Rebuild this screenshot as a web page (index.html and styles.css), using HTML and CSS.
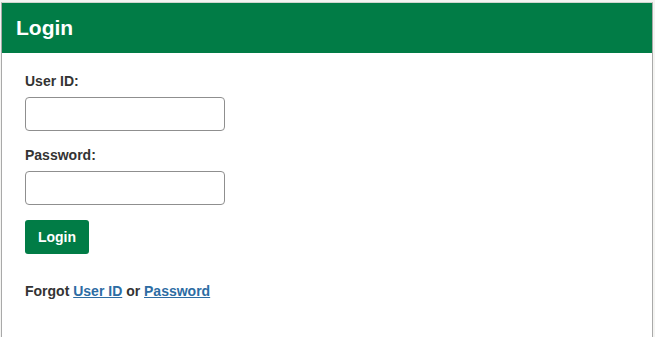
FILE: index.html
```html
<!DOCTYPE html>
<html>
<head>
<meta charset="utf-8">
<link rel="stylesheet" href="styles.css">
</head>
<body>
<div class="panel">
  <div class="panel-header"><h1 class="panel-title">Login</h1></div>
  <form class="panel-body">
    <div class="field">
      <label class="field-label" for="uid">User ID:</label>
      <input class="field-input" id="uid" type="text">
    </div>
    <div class="field">
      <label class="field-label" for="pwd">Password:</label>
      <input class="field-input" id="pwd" type="password">
    </div>
    <button class="btn" type="button">Login</button>
    <p class="forgot">Forgot <a href="#">User ID</a> or <a href="#">Password</a></p>
  </form>
</div>
</body>
</html>
```
FILE: styles.css
```css
html, body {
  margin: 0;
  padding: 0;
  background: #f4f4f2;
}
body {
  padding: 2px 2px 0 1px;
  font-family: "Liberation Sans", Arial, sans-serif;
  height: 335px;
  overflow: hidden;
}
.panel {
  background: #fff;
  border: 1px solid #a9a9a9;
  border-top-color: #cfd6cf;
  border-bottom: 0;
  height: 335px;
  box-sizing: border-box;
}
.panel-header {
  background: #017c46;
  height: 50px;
  display: flex;
  align-items: center;
  padding-left: 14px;
}
.panel-title {
  margin: 0;
  color: #fff;
  font-size: 21px;
  font-weight: bold;
}
.panel-body {
  padding: 19px 23px 0;
  display: flex;
  flex-direction: column;
  align-items: flex-start;
  gap: 15px;
}
.field {
  display: flex;
  flex-direction: column;
}
.field-label {
  font-size: 14px;
  font-weight: bold;
  color: #333;
  line-height: 19px;
  margin-bottom: 6px;
}
.field-input {
  width: 200px;
  height: 34px;
  box-sizing: border-box;
  border: 1px solid #8f8f8f;
  border-radius: 4px;
  margin: 0;
  padding: 4px 8px;
  background: #fff;
}
.btn {
  background: #017c46;
  color: #fff;
  border: 0;
  border-radius: 3px;
  height: 34px;
  width: 64px;
  padding: 0;
  font-family: inherit;
  font-size: 14px;
  font-weight: bold;
}
.forgot {
  margin: 14px 0 0;
  font-size: 14px;
  font-weight: bold;
  color: #333;
  line-height: 16px;
}
.forgot a {
  color: #2c6ca3;
  text-decoration: underline;
}
```
